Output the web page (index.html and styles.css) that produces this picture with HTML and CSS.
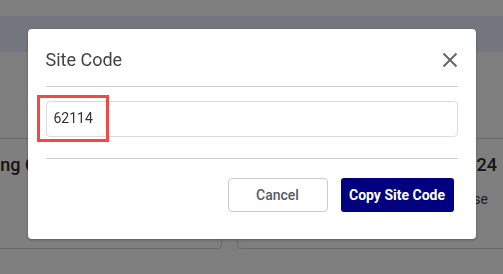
FILE: index.html
```html
<!DOCTYPE html>
<html lang="en">
<head>
<meta charset="utf-8">
<title>Site Code</title>
<link rel="stylesheet" href="styles.css">
</head>
<body>
  <div class="topbar"></div>
  <div class="navband"></div>
  <main class="cards">
    <section class="card card-left">
      <h3 class="card-title">Training Center</h3>
      <p class="card-text">Open</p>
    </section>
    <section class="card card-right">
      <h3 class="card-title">Compliance Schedule 2024</h3>
      <p class="card-text">Review and publish your course</p>
    </section>
  </main>

  <div class="overlay">
    <div class="modal" role="dialog" aria-label="Site Code">
      <div class="modal-header">
        <h2 class="modal-title">Site Code</h2>
        <button class="close-btn" aria-label="Close">
          <svg width="16" height="16" viewBox="0 0 16 16"><path d="M1.5 1.5 L14.5 14.5 M14.5 1.5 L1.5 14.5" stroke="#666" stroke-width="2" fill="none"/></svg>
        </button>
      </div>
      <hr class="divider">
      <div class="modal-body">
        <div class="code-field">62114</div>
        <div class="highlight"></div>
      </div>
      <hr class="divider">
      <div class="modal-footer">
        <button class="btn btn-cancel">Cancel</button>
        <button class="btn btn-primary">Copy Site Code</button>
      </div>
    </div>
  </div>
</body>
</html>
```

FILE: styles.css
```css
* { box-sizing: border-box; }
html, body { margin: 0; padding: 0; }
body {
  width: 503px;
  height: 274px;
  overflow: hidden;
  background: #fcfcfc;
  font-family: Roboto, "Liberation Sans", Arial, sans-serif;
  color: #333;
}
.topbar { height: 16px; background: #ffffff; }
.navband { height: 36px; background: #e6ecff; }
.cards {
  display: flex;
  gap: 15px;
  margin-top: 86px;
  margin-left: -62px;
}
.card {
  flex: none;
  height: 111px;
  background: #ffffff;
  border: 1px solid #d2d2d2;
  border-radius: 4px;
  padding: 14px 16px;
}
.card-left { width: 284px; }
.card-right {
  width: 280px;
  padding-right: 19px;
  text-align: right;
}
.card-title {
  margin: 0;
  font-size: 18px;
  font-weight: 500;
  line-height: 24px;
  color: #2a2a2a;
  white-space: nowrap;
}
.card-text {
  margin: 12px 0 0;
  font-size: 14px;
  line-height: 20px;
  color: #444;
  white-space: nowrap;
}
.card-right .card-text { margin-right: 9px; }

.overlay {
  position: fixed;
  inset: 0;
  background: rgba(0, 0, 0, 0.5);
  display: flex;
  justify-content: center;
  align-items: flex-start;
  padding-top: 29px;
}
.modal {
  width: 448px;
  height: 210px;
  background: #fff;
  border-radius: 4px;
  box-shadow: 0 1px 3px rgba(0,0,0,0.3);
  position: relative;
}
.modal-header {
  display: flex;
  justify-content: space-between;
  align-items: center;
  padding: 19px 18px 14px;
}
.modal-title {
  margin: 0;
  font-size: 18px;
  font-weight: 400;
  line-height: 24px;
  color: #444;
}
.close-btn {
  border: 0;
  background: none;
  padding: 0;
  width: 16px;
  height: 16px;
  display: block;
  cursor: pointer;
}
.close-btn svg { display: block; }
.divider {
  margin: 0 18px;
  border: 0;
  border-top: 1px solid #cfcfcf;
  height: 0;
}
.modal-body {
  padding: 14px 18px 21px;
  position: relative;
}
.code-field {
  height: 36px;
  border: 1px solid #dcdcdc;
  border-radius: 4px;
  padding: 0 7px;
  font-size: 14px;
  line-height: 33px;
  color: #333;
}
.highlight {
  position: absolute;
  left: 9px;
  top: 8px;
  width: 72px;
  height: 47px;
  border: 3px solid #f44848;
}
.modal-footer {
  display: flex;
  justify-content: flex-end;
  gap: 13px;
  padding: 19px 22px 0;
}
.btn {
  font-family: Roboto, "Liberation Sans", Arial, sans-serif;
  font-size: 14px;
  height: 34px;
  border-radius: 4px;
  cursor: pointer;
}
.btn-cancel {
  width: 100px;
  background: #fff;
  border: 1px solid #cccccc;
  color: #555b66;
  font-weight: 500;
}
.btn-primary {
  width: 113px;
  background: #000080;
  border: 0;
  color: #fff;
  font-weight: 700;
  border-radius: 3px;
}
```
